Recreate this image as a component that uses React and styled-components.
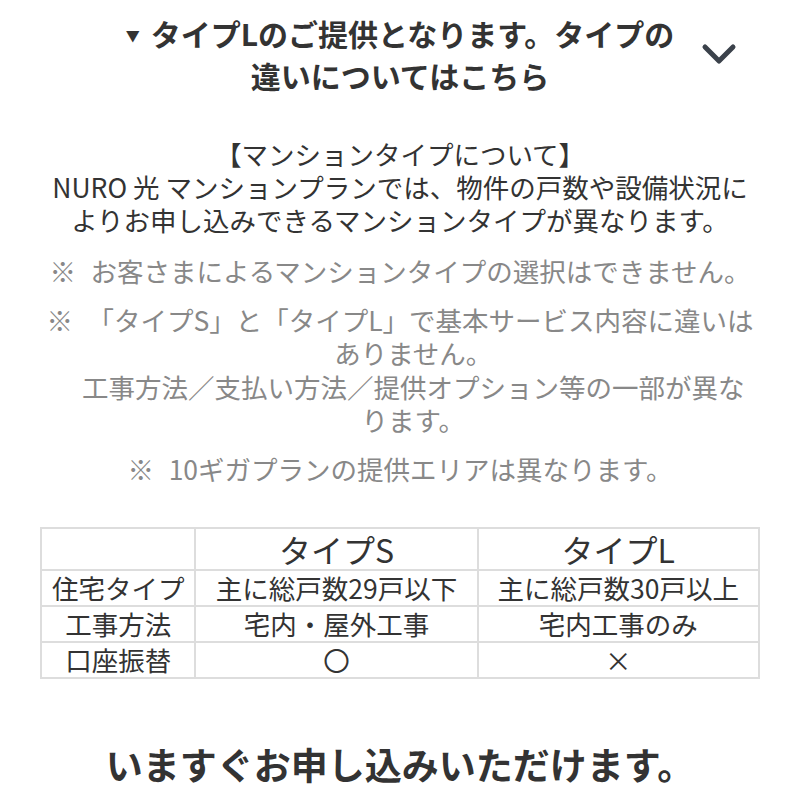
import React from "react";
import styled, { createGlobalStyle } from "styled-components";

const GlobalStyle = createGlobalStyle`
    body {
        margin: 0;
        background: #fff;
        font-family: "Noto Sans CJK JP", "Noto Sans", sans-serif;
        color: #333;
    }
`;

const Page = styled.div`
    width: 800px;
    box-sizing: border-box;
    padding: 13px 40px 0;
`;

const Toggle = styled.div`
    display: grid;
    grid-template-columns: 1fr auto 1fr;
    align-items: center;
    cursor: pointer;
`;

const Title = styled.h2`
    grid-column: 2;
    margin: 0;
    font-size: 30px;
    font-weight: 700;
    line-height: 40px;
    text-align: center;
    color: #333;
`;

const Arrow = styled.span`
    display: inline-block;
    font-size: 14px;
    margin-right: 11px;
    vertical-align: 5px;
`;

const Chevron = styled.svg`
    grid-column: 3;
    justify-self: end;
    margin-right: 23px;
`;

const Lead = styled.p`
    margin: 42px 0 0;
    font-size: 26.5px;
    line-height: 33px;
    text-align: center;
    color: #333;
`;

const Notes = styled.ul`
    list-style: none;
    margin: 18px 0 0;
    padding: 0;
    display: flex;
    flex-direction: column;
    gap: 15px;
`;

const Note = styled.li`
    padding-left: 1em;
    text-indent: -1em;
    font-size: 26.5px;
    line-height: 33.5px;
    text-align: center;
    color: #888;
`;

const Mark = styled.span`
    margin-right: 0.55em;
`;

const Table = styled.table`
    width: 100%;
    margin-top: 42px;
    border-collapse: collapse;
    color: #333;

    th,
    td {
        border: 2px solid #dddddd;
        text-align: center;
        font-weight: 400;
        padding: 1px 0;
    }

    th {
        font-size: 32px;
        line-height: 38px;
    }

    td {
        font-size: 26.5px;
        line-height: 32px;
    }
`;

const Cta = styled.h2`
    margin: 63px 0 0;
    font-size: 37px;
    line-height: 44px;
    font-weight: 700;
    text-align: center;
    color: #333;
`;

const rows = [
    ["住宅タイプ", "主に総戸数29戸以下", "主に総戸数30戸以上"],
    ["工事方法", "宅内・屋外工事", "宅内工事のみ"],
    ["口座振替", "〇", "×"],
];

export default function App() {
    return (
        <>
            <GlobalStyle />
            <Page>
                <Toggle>
                    <Title>
                        <Arrow>▼</Arrow>タイプLのご提供となります。タイプの
                        <br />
                        違いについてはこちら
                    </Title>
                    <Chevron width="36" height="22" viewBox="0 0 36 22">
                        <path
                            d="M4 4 L18 18 L32 4"
                            fill="none"
                            stroke="#3b424b"
                            strokeWidth="5"
                            strokeLinecap="round"
                            strokeLinejoin="round"
                        />
                    </Chevron>
                </Toggle>

                <Lead>
                    【マンションタイプについて】
                    <br />
                    NURO 光 マンションプランでは、物件の戸数や設備状況に
                    <br />
                    よりお申し込みできるマンションタイプが異なります。
                </Lead>

                <Notes>
                    <Note>
                        <Mark>※</Mark>お客さまによるマンションタイプの選択はできません。
                    </Note>
                    <Note>
                        <Mark>※</Mark>「タイプS」と「タイプL」で基本サービス内容に違いは
                        <br />
                        ありません。
                        <br />
                        工事方法／支払い方法／提供オプション等の一部が異な
                        <br />
                        ります。
                    </Note>
                    <Note>
                        <Mark>※</Mark>10ギガプランの提供エリアは異なります。
                    </Note>
                </Notes>

                <Table>
                    <thead>
                        <tr>
                            <th style={{ width: "21.5%" }}></th>
                            <th style={{ width: "39.3%" }}>タイプS</th>
                            <th>タイプL</th>
                        </tr>
                    </thead>
                    <tbody>
                        {rows.map((r) => (
                            <tr key={r[0]}>
                                {r.map((c, i) => (
                                    <td key={i}>{c}</td>
                                ))}
                            </tr>
                        ))}
                    </tbody>
                </Table>

                <Cta>いますぐお申し込みいただけます。</Cta>
            </Page>
        </>
    );
}
